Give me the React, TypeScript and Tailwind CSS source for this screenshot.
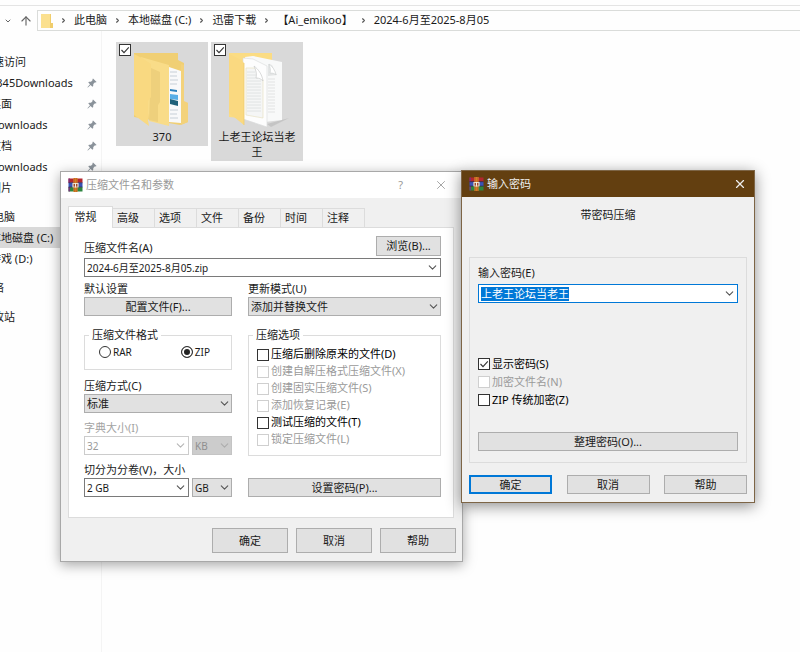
import { useEffect, useRef, type ReactNode } from "react";
import { ArrowUp, ChevronDown, ChevronRight, X } from "lucide-react";

const quickAccess = ["2345Downloads", "桌面", "Downloads", "文档", "Downloads", "图片"];
const drives = ["本地磁盘 (C:)", "游戏 (D:)"];
const crumbs = ["此电脑", "本地磁盘 (C:)", "迅雷下载", "【Ai_emikoo】", "2024-6月至2025-8月05"];
const tabs = ["常规", "高级", "选项", "文件", "备份", "时间", "注释"];

const archiveOptions = [
  { label: "压缩后删除原来的文件(D)", disabled: false },
  { label: "创建自解压格式压缩文件(X)", disabled: true },
  { label: "创建固实压缩文件(S)", disabled: true },
  { label: "添加恢复记录(E)", disabled: true },
  { label: "测试压缩的文件(T)", disabled: false },
  { label: "锁定压缩文件(L)", disabled: true },
];

const PinIcon = () => (
  <svg viewBox="0 0 10 10" className="size-[10px] shrink-0" fill="#8a929a">
    <path d="M6 0.4 9.6 4 8.7 4.6 8 4.3 6.3 6 6.2 8 5.4 8.7 3.6 6.9 0.9 9.5 0.4 9.2 3 6.3 1.3 4.6 2 3.8 4 3.7 5.7 2 5.4 1.2Z" />
  </svg>
);

const WinRarIcon = () => (
  <svg viewBox="0 0 15 14" className="h-[14px] w-[15px] shrink-0">
    <rect x="0.5" y="0.5" width="14" height="4.2" fill="#b3262e" />
    <rect x="0.5" y="4.7" width="14" height="4.4" fill="#3953b5" />
    <rect x="0.5" y="9.1" width="14" height="4.4" fill="#2e8540" />
    <path d="M0.5 0.5h1.4v4.2H0.5zM0.5 9.1h1.4v4.4H0.5z" fill="#7b2f7e" />
    <path d="M0.5 4.7h14M0.5 9.1h14" stroke="#2b1c3d" strokeWidth="0.6" />
    <rect x="5.4" y="0" width="4.2" height="14" fill="#d9822b" />
    <path d="M6.6 0v14M8.4 0v14" stroke="#a8551b" strokeWidth="0.5" />
    <rect x="4.4" y="5" width="6.2" height="4.4" fill="#e9dcc8" />
    <rect x="5.6" y="6" width="3.8" height="2.6" fill="#a04a2c" />
    <rect x="7" y="5" width="1" height="4.4" fill="#f6efe2" />
  </svg>
);

const PicturesFolder = () => (
  <svg viewBox="0 0 92 87" className="block h-[87px] w-full">
    <path d="M18 11h44v7l6 3v39l4 1v19l-8 3-46-8z" fill="#f0cf74" />
    <path d="M53 25l12 4v52l-12-1z" fill="#f8f9fa" />
    <path d="M54 30h7M54 34h7M54 38h8M54 42h7M54 68h8M54 72h7M54 76h8" stroke="#b9c5ce" strokeWidth="0.8" />
    <path d="M54 47l7 1v2l-7-1z" fill="#2c82bd" />
    <path d="M54 52l8 1v5l-8-1z" fill="#58aee6" />
    <path d="M54 57l8 2v5l-8-2z" fill="#1e6079" />
    <path d="M65 22l3 1v36l4 2v19l-7 3z" fill="#f3d27b" />
    <path d="M25 15l28 8v61l-20-5z" fill="#f9dc88" />
    <path d="M35 26l9 4v30l-2 3v17l-9-2z" fill="#eed07c" />
    <path d="M18 12l8 4 9 6v33l-3 4v19l1 6-15-11z" fill="#f9d981" />
  </svg>
);

const DocumentsFolder = () => (
  <svg viewBox="0 0 92 87" className="block h-[87px] w-full">
    <path d="M18 11h43v68l-43-4z" fill="#fbdc83" />
    <path d="M56 82l22-6-18 9z" fill="#c4c4c4" />
    <path d="M34 15l8-1 29 6v58l-26 3z" fill="#f8f9f9" />
    <path d="M57 22l4 1 5 10-9 1z" fill="#e3e5e5" />
    <path d="M58 22c3 2 6 6 7 11-2-2-4-2-6-2 1-3 0-6-1-9z" fill="#ffffff" stroke="#cdd0d0" strokeWidth="0.6" />
    <path d="M57 37h7M57 40h7M57 43h7M57 46h7M57 49h7M57 52h7M57 55h7M57 58h7M57 61h7M57 64h7M57 67h7M57 70h7" stroke="#dcdede" strokeWidth="0.8" />
    <path d="M32 16l10 1 14 7v61l-24-8z" fill="#fdfdfd" stroke="#d8dada" strokeWidth="0.6" />
    <path d="M35 26h9l8 12v38l-17-3z" fill="#f5f6f6" stroke="#e5dfbd" strokeWidth="0.6" />
    <path d="M36 30h8M36 33h9M36 36h11M36 39h14M36 42h14M36 45h14M36 48h14M36 51h14M36 54h14M36 57h14M36 60h14M36 63h14M36 66h14M36 69h14" stroke="#dfe1e1" strokeWidth="0.9" />
    <path d="M43 24c4 3 8 8 9 15-3-3-5-3-7-3 1-4 0-8-2-12z" fill="#ffffff" stroke="#c8caca" strokeWidth="0.7" />
    <path d="M18 12l12 6 3 3v62l-15-12z" fill="#fad980" />
    <path d="M33 21v62" stroke="#eecb70" strokeWidth="0.8" />
  </svg>
);

interface CheckProps {
  label: string;
  disabled?: boolean;
  defaultChecked?: boolean;
  hideLabel?: boolean;
}

const Check = ({ label, disabled, defaultChecked, hideLabel }: CheckProps) => (
  <label className={`flex items-center gap-[2px] whitespace-nowrap ${disabled ? "text-[#9a9a9a]" : "text-black"}`}>
    <span className="grid size-[12px] shrink-0 place-items-center">
      <input
        type="checkbox"
        aria-label={hideLabel ? label : undefined}
        defaultChecked={defaultChecked}
        disabled={disabled}
        className="peer col-start-1 row-start-1 size-[12px] appearance-none border border-[#333] bg-white disabled:border-[#cfcfcf]"
      />
      <svg viewBox="0 0 12 12" className="pointer-events-none col-start-1 row-start-1 hidden size-[12px] peer-checked:block">
        <path d="M2.5 6l2.5 2.6L9.8 3.4" fill="none" stroke="#333" strokeWidth="1.1" />
      </svg>
    </span>
    {!hideLabel && label}
  </label>
);

interface DropdownProps {
  id?: string;
  label?: string;
  value: string;
  disabled?: boolean;
  className?: string;
}

const Dropdown = ({ id, label, value, disabled, className = "" }: DropdownProps) => (
  <div className={`grid shrink-0 items-center ${className}`}>
    <select
      id={id}
      aria-label={label}
      disabled={disabled}
      className="col-start-1 row-start-1 h-[19px] w-full appearance-none border border-[#adadad] bg-[#e1e1e1] pl-[2px] leading-4 disabled:border-[#c4c4c4] disabled:bg-[#cccccc] disabled:text-[#8f8f8f] disabled:opacity-100"
    >
      <option>{value}</option>
    </select>
    <ChevronDown
      className={`pointer-events-none col-start-1 row-start-1 mr-[1px] size-[13px] justify-self-end ${disabled ? "text-[#adadad]" : "text-[#555]"}`}
    />
  </div>
);

interface ComboProps {
  id: string;
  value: string;
  disabled?: boolean;
  focused?: boolean;
  className?: string;
}

const Combo = ({ id, value, disabled, focused, className = "" }: ComboProps) => {
  const ref = useRef<HTMLInputElement>(null);

  useEffect(() => {
    if (focused) {
      ref.current?.focus();
      ref.current?.select();
    }
  }, [focused]);

  return (
    <div
      className={`flex h-[19px] min-w-0 items-center border bg-white pr-[1px] pl-[2px] ${
        focused ? "border-[#0078d7]" : disabled ? "border-[#cccccc]" : "border-[#7a7a7a]"
      } ${className}`}
    >
      <input
        ref={ref}
        id={id}
        defaultValue={value}
        disabled={disabled}
        className={`h-[14px] min-w-0 flex-1 leading-[14px] outline-none selection:bg-[#0078d7] selection:text-white disabled:text-[#9a9a9a] ${
          focused ? "text-[11px]" : "text-[10px]"
        }`}
      />
      <button type="button" aria-label="展开" disabled={disabled} className="text-[#555] disabled:text-[#b5b5b5]">
        <ChevronDown className="size-[13px]" />
      </button>
    </div>
  );
};

interface PushButtonProps {
  children: ReactNode;
  primary?: boolean;
  className?: string;
}

const PushButton = ({ children, primary, className = "" }: PushButtonProps) => (
  <button
    type="button"
    className={`flex items-center justify-center bg-[#e1e1e1] leading-4 ${
      primary ? "border-2 border-[#0078d7]" : "border border-[#adadad]"
    } ${className}`}
  >
    {children}
  </button>
);

const AddressBar = () => (
  <header className="pt-[5px]">
    <div className="flex items-center border-t border-[#e4e4e4] pt-1">
      <ChevronDown className="ml-1 size-[8px] shrink-0 text-[#666]" strokeWidth={3} />
      <ArrowUp className="ml-[7px] size-[14px] shrink-0 text-[#666]" />
      <nav className="ml-[4px] flex h-[21px] flex-1 items-center border border-r-0 border-[#dadcda] pl-[3px]">
        <svg viewBox="0 0 12 14" className="h-[14px] w-[12px] shrink-0">
          <path d="M0 0h10v9h2v5H0z" fill="#f0cd6c" />
          <path d="M0 0h9v14H0z" fill="#fbe08f" />
        </svg>
        {crumbs.map((crumb) => (
          <div key={crumb} className="flex items-center whitespace-nowrap">
            <ChevronRight className="mx-[7px] size-[7px] text-[#555]" strokeWidth={4} />
            <a href="#">{crumb}</a>
          </div>
        ))}
      </nav>
    </div>
  </header>
);

// The pane is scrolled a little to the right, so each row starts past the left edge.
const Sidebar = () => (
  <aside className="w-[102px] shrink-0 overflow-hidden border-r border-[#f4f4f4] pt-5 leading-[21px] whitespace-nowrap">
    <div className="-ml-[18px] flex flex-col gap-2">
      <div>
        <p>快速访问</p>
        {quickAccess.map((name, i) => (
          <div key={i} className="flex items-center justify-between pr-1 pl-2">
            <span>{name}</span>
            {name !== "图片" && <PinIcon />}
          </div>
        ))}
      </div>
      <div>
        <p>此电脑</p>
        {drives.map((name, i) => (
          <p key={name} className={`pl-2 ${i === 0 ? "bg-[#d9d9d9]" : ""}`}>
            {name}
          </p>
        ))}
      </div>
      <p>网络</p>
      <p>回收站</p>
    </div>
  </aside>
);

const FolderTile = ({ name, children }: { name: string; children: ReactNode }) => (
  <div className="w-[92px] bg-[#d9d9d9] pb-[2px] text-center">
    <div className="grid">
      <div className="col-start-1 row-start-1 pt-[2px] pl-[3px]">
        <Check label={name} defaultChecked hideLabel />
      </div>
      <div className="pointer-events-none col-start-1 row-start-1">{children}</div>
    </div>
    <p className="px-1 leading-[15px]">{name}</p>
  </div>
);

const ArchiveDialog = () => (
  <section className="absolute top-[171px] left-[60px] w-[403px] border border-[#a8a8a8] bg-[#f0f0f0] shadow-[0_3px_12px_rgba(0,0,0,0.35)]">
    <div className="flex h-[26px] items-center bg-white pr-[14px] pl-[7px] text-[#999]">
      <WinRarIcon />
      <h2 className="ml-[3px] flex-1">压缩文件名和参数</h2>
      <button type="button" className="mr-[31px]">?</button>
      <button type="button" aria-label="关闭">
        <X className="size-[14px]" strokeWidth={1.5} />
      </button>
    </div>
    <div className="pt-2 pr-[6px] pb-2 pl-[7px]">
      <div role="tablist" className="flex items-end">
        {tabs.map((tab, i) => (
          <button
            key={tab}
            type="button"
            role="tab"
            aria-selected={i === 0}
            className={
              i === 0
                ? "z-10 -mb-px h-[22px] w-[45px] border border-b-0 border-[#dcdcdc] bg-white pr-[10px]"
                : "h-[19px] w-[42px] border-t border-r border-[#dcdcdc] pr-[11px]"
            }
          >
            {tab}
          </button>
        ))}
      </div>
      <div className="mr-[2px] border border-[#dcdcdc] bg-white pt-2 pr-3 pb-5 pl-[15px]">
        <div className="flex items-end justify-between">
          <label htmlFor="archive-name" className="leading-4">压缩文件名(A)</label>
          <PushButton className="h-[20px] w-[65px]">浏览(B)...</PushButton>
        </div>
        <Combo id="archive-name" value="2024-6月至2025-8月05.zip" className="mt-[2px]" />
        <div className="mt-1 flex gap-4">
          <div className="flex w-[148px] flex-col">
            <p className="leading-4">默认设置</p>
            <PushButton className="h-[19px]">配置文件(F)...</PushButton>
            <fieldset className="mt-[11px] border border-[#dcdcdc] pb-2">
              <legend className="ml-1 px-[3px] leading-4">压缩文件格式</legend>
              <div className="flex h-[18px] items-center text-[10px]">
                <label className="ml-[14px] flex items-center gap-[2px]">
                  <input type="radio" name="format" className="size-[12px] appearance-none rounded-full border border-[#333] bg-white" />
                  RAR
                </label>
                <label className="ml-[49px] flex items-center gap-[2px]">
                  <input
                    type="radio"
                    name="format"
                    defaultChecked
                    className="size-[12px] appearance-none rounded-full border border-[#333] bg-white checked:bg-[#222] checked:shadow-[inset_0_0_0_2px_white]"
                  />
                  ZIP
                </label>
              </div>
            </fieldset>
            <label htmlFor="method" className="mt-2 leading-4">压缩方式(C)</label>
            <Dropdown id="method" value="标准" />
            <label htmlFor="dictionary" className="mt-[7px] leading-4 text-[#a3a3a3]">字典大小(I)</label>
            <div className="flex gap-[3px]">
              <Combo id="dictionary" value="32" disabled className="flex-1" />
              <Dropdown label="字典单位" value="KB" disabled className="w-[40px] text-[10px]" />
            </div>
            <label htmlFor="volume" className="mt-[7px] leading-4">切分为分卷(V)，大小</label>
            <div className="flex gap-[3px]">
              <Combo id="volume" value="2 GB" className="flex-1" />
              <Dropdown label="分卷单位" value="GB" className="w-[40px] text-[10px]" />
            </div>
          </div>
          <div className="flex flex-1 flex-col">
            <label htmlFor="update-mode" className="leading-4">更新模式(U)</label>
            <Dropdown id="update-mode" value="添加并替换文件" />
            <fieldset className="mt-[11px] border border-[#dcdcdc] pt-[3px] pb-[7px] pl-2">
              <legend className="-ml-1 px-[3px] leading-4">压缩选项</legend>
              {archiveOptions.map((option) => (
                <div key={option.label} className="flex h-[17px] items-center">
                  <Check label={option.label} disabled={option.disabled} />
                </div>
              ))}
            </fieldset>
            <PushButton className="mt-[22px] h-[19px]">设置密码(P)...</PushButton>
          </div>
        </div>
      </div>
      <div className="mt-[10px] flex justify-end gap-2">
        <PushButton className="h-[25px] w-[76px]">确定</PushButton>
        <PushButton className="h-[25px] w-[76px]">取消</PushButton>
        <PushButton className="h-[25px] w-[76px]">帮助</PushButton>
      </div>
    </div>
  </section>
);

const PasswordDialog = () => (
  <section className="absolute top-[170px] left-[461px] w-[294px] border border-[#7d6546] bg-[#f0f0f0] shadow-[0_3px_14px_rgba(0,0,0,0.45)]">
    <div className="flex h-[26px] items-center bg-[#633f10] pr-[7px] pl-[7px] text-[#eee]">
      <WinRarIcon />
      <h2 className="ml-[3px] flex-1">输入密码</h2>
      <button type="button" aria-label="关闭">
        <X className="size-[14px]" strokeWidth={2} />
      </button>
    </div>
    <div className="px-[7px] pt-[10px] pb-2">
      <p className="text-center leading-4">带密码压缩</p>
      <div className="mt-[34px] flex flex-col border border-[#dcdcdc] px-2 pt-[7px] pb-[11px]">
        <label htmlFor="password" className="leading-4">输入密码(E)</label>
        <Combo id="password" value="上老王论坛当老王" focused className="mt-[3px]" />
        <div className="mt-[52px] flex h-[54px] flex-col justify-around">
          <Check label="显示密码(S)" defaultChecked />
          <Check label="加密文件名(N)" disabled />
          <Check label="ZIP 传统加密(Z)" />
        </div>
        <PushButton className="mt-[23px] h-[19px]">整理密码(O)...</PushButton>
      </div>
      <div className="mt-3 flex justify-between">
        <PushButton primary className="h-[19px] w-[83px]">确定</PushButton>
        <PushButton className="h-[19px] w-[83px]">取消</PushButton>
        <PushButton className="h-[19px] w-[83px]">帮助</PushButton>
      </div>
    </div>
  </section>
);

export default function App() {
  return (
    <div className="relative flex min-h-screen flex-col overflow-hidden bg-[#fefefe] font-['Noto_Sans','Noto_Sans_CJK_SC',sans-serif] text-[11px] text-[#1a1a1a]">
      <AddressBar />
      <div className="flex flex-1">
        <Sidebar />
        <main className="flex flex-1 items-start gap-[3px] pt-[11px] pl-[14px]">
          <FolderTile name="370">
            <PicturesFolder />
          </FolderTile>
          <FolderTile name="上老王论坛当老王">
            <DocumentsFolder />
          </FolderTile>
        </main>
      </div>
      <ArchiveDialog />
      <PasswordDialog />
    </div>
  );
}
